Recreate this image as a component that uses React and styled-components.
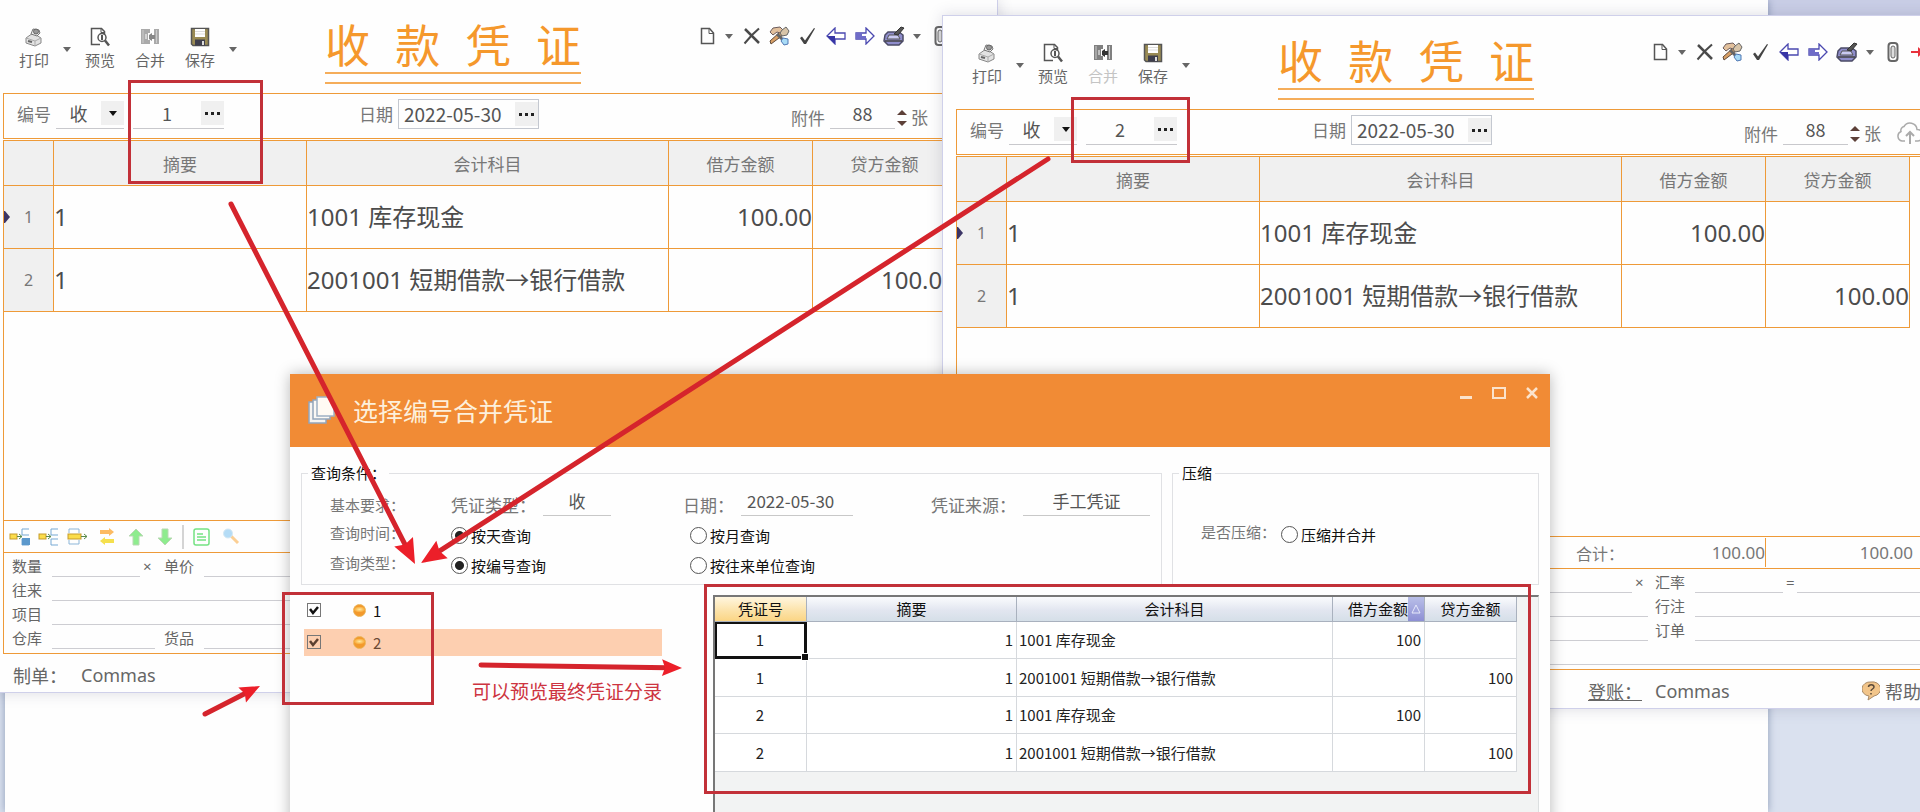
import React, { useState } from "react";
import styled, { createGlobalStyle, css } from "styled-components";

const GlobalStyle = createGlobalStyle`
  * {
    box-sizing: border-box;
  }
  body {
    margin: 0;
    font-family: "Noto Sans", "Noto Sans CJK SC", sans-serif;
    color: #666;
  }
  button, input, select {
    font-family: inherit;
    font-size: inherit;
    color: inherit;
    margin: 0;
    padding: 0;
    border: 0;
    border-radius: 0;
    background: transparent;
    outline: none;
  }
`;

const line = "#ee9a38";

const Desktop = styled.main`
  position: relative;
  height: 100vh;
  overflow: hidden;
  padding: 0 152px 0 5px;
  background: linear-gradient(#c9cee6 18px, #dae1ef 18px);
`;
const Page = styled.div`
  height: 100%;
  background: #fefefe;
  box-shadow: 0 0 8px rgba(70, 90, 130, 0.5);
`;

/* voucher window */
const Window = styled.section`
  position: absolute;
  left: ${(props) => props.$left}px;
  top: ${(props) => props.$top}px;
  width: 1009px;
  height: 694px;
  display: flex;
  flex-direction: column;
  border: 1px solid #cfd0ea;
  background: #fefefe;
  box-shadow: 0 0 14px rgba(60, 60, 100, 0.18);
  .${(props) => props.$covered}-part {
    visibility: hidden;
  }
`;
const WindowHeader = styled.header`
  display: flex;
  align-items: flex-start;
  height: 93px;
  padding-left: 19px;
`;
const Tools = styled.div`
  display: flex;
  padding-top: 27px;
`;
const ToolButton = styled.button`
  width: 50px;
  display: flex;
  flex-direction: column;
  align-items: center;
  gap: 3px;
  font-size: 15px;
  line-height: 20px;
  color: #666;
  &:disabled {
    color: #c4c4c4;
  }
`;
const DropButton = styled.button`
  width: ${(props) => props.$width || 16}px;
  height: 44px;
  display: flex;
  align-items: center;
  justify-content: center;
`;
const Caret = styled.span`
  border: 4px solid transparent;
  border-top: 5px solid ${(props) => props.color || "#666"};
  border-bottom: 0;
`;
const Title = styled.h1`
  width: 256px;
  margin: 20px 0 0 84px;
  display: flex;
  flex-wrap: wrap;
  justify-content: space-between;
  font-size: 45px;
  line-height: 52px;
  font-weight: 400;
  color: #f5982c;
  &::after {
    content: "";
    width: 100%;
    height: 8px;
    border-top: 2px solid #f5ad5a;
    border-bottom: 2px solid #f5ad5a;
  }
`;
const Actions = styled.div`
  display: flex;
  align-items: center;
  margin: 14px 0 0 115px;
`;
const Action = styled.button`
  width: ${(props) => props.$width || 29}px;
  height: 44px;
  display: flex;
  align-items: center;
  justify-content: center;
`;

const FilterBar = styled.div`
  display: flex;
  height: 46px;
  margin: 0 12px 0 13px;
  padding: 5px 0 0 13px;
  border: 1px solid ${line};
  font-size: 17px;
  line-height: 32px;
  color: #777;
`;
const Group = styled.div`
  display: flex;
  align-items: flex-start;
  margin-left: ${(props) => props.$left || 0}px;
`;
const FieldLabel = styled.label`
  white-space: nowrap;
  margin-right: 5px;
  padding-top: ${(props) => props.$drop || 0}px;
`;
const boxed = css`
  border: 1px solid #c4c8d0;
`;
const Picker = styled.div`
  display: flex;
  width: ${(props) => props.$width}px;
  height: 30px;
  margin-left: ${(props) => props.$left || 0}px;
  border-bottom: 1px solid #c8c8cc;
  color: #555;
  ${(props) => props.$boxed && boxed}
  select,
  input {
    flex: 1;
    min-width: 0;
    height: ${(props) => (props.$boxed ? 26 : 28)}px;
    padding: 0;
    text-align: ${(props) => (props.$boxed ? "left" : "center")};
    text-indent: ${(props) => (props.$boxed ? 5 : 0)}px;
    font-family: "Noto Sans CJK SC", sans-serif;
    font-size: ${(props) => (props.$boxed ? 19 : 18)}px;
  }
  select {
    appearance: none;
  }
`;
const PickerButton = styled.button`
  width: 23px;
  height: 24px;
  margin: 2px 0 0;
  display: flex;
  align-items: center;
  justify-content: center;
  gap: 3px;
  background: #f0f0f0;
  i {
    width: 3px;
    height: 3px;
    background: #222;
  }
`;
const Spinner = styled.div`
  display: flex;
  flex-direction: column;
  gap: 6px;
  padding-top: 11px;
  margin: 0 4px 0 2px;
  button {
    width: 10px;
    height: 5px;
    display: flex;
  }
  button:first-child {
    transform: rotate(180deg);
  }
  ${Caret} {
    border-width: 5px 5px 0;
  }
`;
const Cloud = styled.button`
  margin-left: 10px;
  padding-top: 6px;
  display: flex;
`;

const Frame = styled.div`
  flex: 1;
  display: flex;
  flex-direction: column;
  margin: 1px 12px 0 13px;
  border: 1px solid ${line};
  min-height: 0;
`;
const EntryTable = styled.table`
  width: calc(100% - 27px);
  table-layout: fixed;
  border-collapse: separate;
  border-spacing: 0;
  th,
  td {
    padding: 0;
    border-right: 1px solid ${line};
    border-bottom: 1px solid ${line};
  }
  th {
    background: #f0f0f0;
    font-size: 17px;
    font-weight: 400;
    color: #777;
  }
  thead th {
    height: 45px;
  }
  td {
    height: 63px;
    font-size: 24px;
    line-height: 32px;
    color: #4c4c4c;
    white-space: nowrap;
  }
`;
const Col = styled.col`
  width: ${(props) => (props.$width ? props.$width + "px" : "auto")};
`;
const RowHead = styled.th`
  && {
    font-size: 16px;
  }
`;
const RowHeadInner = styled.div`
  display: grid;
  grid-template-columns: 8px 1fr 8px;
  align-items: center;
  svg {
    display: block;
  }
`;
const Amount = styled.td`
  text-align: right;
`;
const Blank = styled.div`
  flex: 1;
`;
const LineTools = styled.div`
  display: flex;
  align-items: center;
  height: 33px;
  padding-left: 1px;
  border-top: 1px solid ${line};
  border-bottom: 1px solid ${line};
`;
const LineTool = styled.button`
  width: 29px;
  height: 24px;
  display: flex;
  align-items: center;
  justify-content: center;
`;
const Divider = styled.span`
  width: 2px;
  height: 24px;
  margin: 0 3px;
  background: #d4d4d4;
`;
const Totals = styled.div`
  display: flex;
  align-self: stretch;
  align-items: center;
  margin-left: auto;
  margin-right: 23px;
  font-size: 17px;
  color: #777;
`;
const TotalLabel = styled.span`
  width: 62px;
  font-size: 16px;
`;
const Total = styled.output`
  width: ${(props) => props.$width}px;
  height: 29px;
  line-height: 29px;
  text-align: right;
  border-right: 1px solid ${(props) => (props.$last ? "transparent" : line)};
`;
const Details = styled.div`
  display: grid;
  grid-template-rows: repeat(4, 24px);
  height: 100px;
  padding-left: 8px;
  font-size: 15px;
  line-height: 26px;
`;
const DetailRow = styled.div`
  display: flex;
  label {
    width: 40px;
    white-space: nowrap;
  }
`;
const Sign = styled.span`
  width: ${(props) => props.$width}px;
  padding-left: 3px;
`;
const LineInput = styled.input`
  height: 24px;
  min-width: 0;
  width: ${(props) => props.$width || 0}px;
  flex: ${(props) => (props.$width ? "none" : 1)};
  margin-right: ${(props) => props.$gap || 0}px;
  border-bottom: 1px solid #cdcdd2;
`;
const WindowFooter = styled.footer`
  display: flex;
  align-items: center;
  height: 38px;
  padding: 4px 0 0 23px;
  font-size: 18px;
`;
const Maker = styled.span`
  width: 68px;
`;
const Poster = styled.span`
  width: 67px;
  margin-left: 479px;
  text-decoration: underline;
  white-space: nowrap;
`;
const FooterName = styled.span`
  width: 75px;
`;
const Help = styled.a`
  display: flex;
  align-items: center;
  gap: 5px;
  margin-left: 132px;
  color: inherit;
  text-decoration: none;
  white-space: nowrap;
`;

/* merge dialog */
const Dialog = styled.section`
  position: absolute;
  left: 290px;
  top: 374px;
  width: 1260px;
  min-height: 460px;
  display: flex;
  flex-direction: column;
  background: #fefefe;
  box-shadow: 0 0 14px rgba(0, 0, 0, 0.28);
  font-family: "Noto Sans CJK SC", sans-serif;
`;
const DialogHeader = styled.header`
  display: flex;
  align-items: center;
  height: 73px;
  padding: 0 10px 2px 18px;
  background: #f18b35;
  h2 {
    flex: 1;
    margin: 0 0 0 17px;
    font-size: 25px;
    line-height: 36px;
    font-weight: 400;
    color: #fdf0dc;
  }
`;
const DialogControls = styled.div`
  display: flex;
  align-self: flex-start;
  gap: 17px;
  padding-top: 8px;
  button {
    width: 16px;
    height: 16px;
  }
`;
const DialogBody = styled.div`
  flex: 1;
  display: grid;
  grid-template-columns: 861px 1fr;
  grid-template-rows: auto 1fr;
  column-gap: 10px;
  padding: 16px 11px 0;
`;
const Fieldset = styled.fieldset`
  margin: 0;
  min-width: 0;
  height: 122px;
  padding: 5px 6px 6px;
  border: 1px solid #e0e1e4;
  font-size: 15px;
  color: #777;
  legend {
    padding: 0 3px;
    line-height: 20px;
    color: #111;
  }
`;
const QueryRow = styled.div`
  display: grid;
  grid-template-columns: 121px 239px 241px 1fr;
  align-items: center;
  height: 30px;
  padding: 0 0 4px 22px;
`;
const Value = styled.label`
  display: flex;
  align-items: center;
  gap: 7px;
  font-size: 17px;
  white-space: nowrap;
  margin-left: ${(props) => props.$left || 0}px;
`;
const ValueInput = styled.input`
  width: ${(props) => props.$width}px;
  height: 28px;
  padding: 0 6px 2px;
  margin-bottom: 4px;
  text-align: ${(props) => props.$align || "center"};
  border-bottom: 1px solid #c8c8c8;
  color: #555;
`;
const Choice = styled.label`
  display: flex;
  align-items: center;
  gap: 3px;
  padding-top: 7px;
  color: #111;
  white-space: nowrap;
  input {
    appearance: none;
    width: 17px;
    height: 17px;
    border: 1px solid #555;
    border-radius: 50%;
    background: #fff;
  }
  input:checked {
    background: radial-gradient(circle, #222 4px, #fff 5px);
  }
`;
const CompressRow = styled.div`
  display: flex;
  align-items: center;
  gap: 5px;
  height: 30px;
  margin-top: 30px;
  padding: 0 0 4px 22px;
`;
const Lower = styled.div`
  grid-column: 1 / -1;
  display: flex;
  padding-top: 10px;
`;
const NumberList = styled.ul`
  width: 358px;
  margin: 2px 51px 0 3px;
  padding: 0;
  list-style: none;
`;
const NumberItem = styled.li`
  height: 27px;
  margin-bottom: 5px;
  background: ${(props) => (props.$active ? "#fdcfb0" : "transparent")};
  label {
    display: flex;
    align-items: center;
    height: 26px;
    padding-left: 3px;
    font-size: 15px;
    color: ${(props) => (props.$active ? "#6b4a35" : "#111")};
  }
`;
const Check = styled.span`
  display: grid;
  width: 14px;
  height: 14px;
  margin-right: 32px;
  input,
  svg {
    grid-area: 1 / 1;
    width: 14px;
    height: 14px;
  }
  input {
    appearance: none;
    border: 1px solid #777;
  }
  svg {
    pointer-events: none;
  }
  input:not(:checked) + svg {
    visibility: hidden;
  }
`;
const Ball = styled.span`
  width: 13px;
  height: 13px;
  margin-right: 7px;
  border-radius: 50%;
  border: 1px solid #eab355;
  background: radial-gradient(ellipse 6px 3px at 50% 40%, #ffe9a0, #f9b042 80%, #f3992c);
`;
const GridPanel = styled.div`
  flex: 1;
  border: 1px solid #dcdfe0;
  border-top: 2px solid #777;
  border-left: 2px solid #777;
  background: #f2f3f3;
`;
const PreviewTable = styled.table`
  width: calc(100% - 21px);
  table-layout: fixed;
  border-collapse: separate;
  border-spacing: 0;
  font-size: 15px;
  line-height: 20px;
  color: #222;
  th,
  td {
    border-right: 1px solid #d6d9dd;
    border-bottom: 1px solid #d6d9dd;
    white-space: nowrap;
  }
  th {
    height: 25px;
    padding: 0;
    font-weight: 400;
    color: #111;
    border-color: #a9b1be;
    background: linear-gradient(#fafbfd, #e2e6f0 55%, #d5dfe8);
  }
  th:first-child {
    background: linear-gradient(#fff6df, #fce3ab 55%, #fbd584);
  }
  td {
    height: 37px;
    padding: 0 3px 0 2px;
    background: #fff;
    text-align: right;
  }
  tr:nth-child(even) td {
    height: 38px;
  }
  td:first-child {
    text-align: center;
  }
  td:nth-child(3) {
    text-align: left;
  }
`;
const SortHead = styled.div`
  display: flex;
  justify-content: flex-end;
  overflow: hidden;
  line-height: 24px;
`;
const SortMark = styled.button`
  width: 16px;
  height: 24px;
  background: linear-gradient(#b9bfe8, #8d8fd4);
  svg {
    display: block;
    margin: 0 auto;
  }
`;
const CurrentCell = styled.td`
  && {
    position: relative;
    border: 2px solid #111;
    border-right-width: 3px;
    border-bottom-width: 3px;
  }
  &::after {
    content: "";
    position: absolute;
    right: -5px;
    bottom: -5px;
    width: 6px;
    height: 6px;
    background: #111;
    border: 1px solid #fff;
  }
`;

/* red marks over the windows */
const MarkBox = styled.div`
  position: absolute;
  left: ${(props) => props.$x}px;
  top: ${(props) => props.$y}px;
  width: ${(props) => props.$w}px;
  height: ${(props) => props.$h}px;
  border: 3px solid #c23038;
  pointer-events: none;
`;
const MarkLayer = styled.svg`
  position: absolute;
  left: 0;
  top: 0;
  width: 1920px;
  height: 812px;
  pointer-events: none;
`;
const MarkText = styled.p`
  position: absolute;
  left: 472px;
  top: 678px;
  margin: 0;
  font-size: 19px;
  line-height: 28px;
  color: #cd3440;
`;

const PrintIcon = () => (
  <svg width="20" height="20" viewBox="0 0 20 20">
    <path d="M2 11l7-5 8 5v5l-6 3-9-3z" fill="#e2e2e2" stroke="#888" />
    <path d="M2 11l9 3 6-3M11 14v5" fill="none" stroke="#aaa" />
    <path d="M7 7l2-5 6 1 1 3-3 3z" fill="#eee" stroke="#777" />
    <circle cx="12" cy="4.500" r="2.500" fill="#999" stroke="#666" />
    <path d="M4 14l4 1" stroke="#666" strokeWidth="2" />
  </svg>
);
const PreviewIcon = () => (
  <svg width="20" height="20" viewBox="0 0 20 20" fill="none" stroke="#555">
    <path d="M10 17.500H1.500v-16h10l3 3V8" strokeWidth="1.500" />
    <path d="M11 1.500v4h4" />
    <circle cx="12" cy="10.500" r="4" strokeWidth="1.500" />
    <path d="M12 8v5" strokeWidth="2" />
    <path d="M15 13.500l4 5" strokeWidth="2.500" />
  </svg>
);
const MergeIcon = ({ dark }) => (
  <svg width="20" height="20" viewBox="0 0 20 20">
    <g fill={dark ? "#808080" : "#aaa"}>
      <path d="M1 2h9v4H8v7h2v4H1zM14 2h5v15h-5z" />
      <path d="M9 8l3-2v2h3v4h-3v2L9 12z" fill={dark ? "#333" : "#888"} />
    </g>
    <path d="M3 3v13M16.500 3v13" stroke="#ccc" />
    <path d="M6 7v5" stroke="#fff" />
  </svg>
);
const SaveIcon = () => (
  <svg width="20" height="20" viewBox="0 0 20 20">
    <path d="M1.500 1.500h17v17H3l-1.500-1.500z" fill="#9a8b54" stroke="#555" strokeWidth="1.500" />
    <path d="M5 2h10v8H5z" fill="#fff" />
    <path d="M5 4.500h10M5 7h10" stroke="#ddd" />
    <path d="M5 12.500h10v6H5z" fill="#3e3e4c" />
    <path d="M12 14h2v4h-2z" fill="#ddd" />
  </svg>
);
const PageIcon = () => (
  <svg width="16" height="18" viewBox="0 0 16 18" fill="none" stroke="#555" strokeWidth="1.500">
    <path d="M1.500 1.500h8l4 4.500v10.500h-12z" />
    <path d="M9 1.500v5h4.500" strokeWidth="1" />
  </svg>
);
const CrossIcon = () => (
  <svg width="18" height="18" viewBox="0 0 18 18" fill="none" stroke="#4a4a4a">
    <path d="M2 2l14 14" strokeWidth="2.500" />
    <path d="M16 1.500L9 8 1.500 16.500" strokeWidth="2" />
  </svg>
);
const ToolsIcon = () => (
  <svg width="21" height="20" viewBox="0 0 21 20">
    <path d="M2 18l-1-3 10-9 3 3z" fill="#d9a066" stroke="#604a3a" />
    <path d="M1 6l3-4 7-1 3 3-3 3-3-1-4 3z" fill="#e2c09c" stroke="#6b5b5b" />
    <path d="M8 8l9 9" stroke="#666" strokeWidth="3" />
    <path d="M13 4l4-3 3 4-2 4-5 1-2-3z" fill="#d8c4a8" stroke="#666" />
    <path d="M14 12l5 1v5l-4 1-3-4z" fill="#a9dcf7" stroke="#5078b4" />
  </svg>
);
const CheckIcon = () => (
  <svg width="17" height="18" viewBox="0 0 17 18">
    <path d="M1 11l2-1.500 3 4L15 1l1 .5L7 17H5z" fill="#444" />
  </svg>
);
const ArrowIcon = ({ right }) => (
  <svg width="20" height="18" viewBox="0 0 20 18">
    <g transform={right ? "matrix(-1 0 0 1 20 0)" : undefined}>
      <path d="M1 9l8-8v5h10v6H9v5z" fill="#fff" stroke="#4a48b0" strokeWidth="1.300" />
      {right ? (
        <path d="M9 9h10v3H9zM13 6h6v3h-6z" fill="#6f6cc8" />
      ) : (
        <path d="M1 9h8v8z" fill="#3735a5" />
      )}
    </g>
  </svg>
);
const FaxIcon = () => (
  <svg width="22" height="20" viewBox="0 0 22 20">
    <path d="M2 9l3-3h11l4 3v6l-4 4H5l-4-4z" fill="#8f8dcc" stroke="#4b4b66" strokeWidth="1.500" />
    <path d="M6 9h9l2 4H4z" fill="#c9c9f2" stroke="#555" />
    <path d="M2 15h17" stroke="#444" strokeWidth="1.500" />
    <path d="M11 8l7-7 3 1-6 7z" fill="#555" stroke="#333" />
  </svg>
);
const ClipIcon = () => (
  <svg width="12" height="20" viewBox="0 0 12 20" fill="none" stroke="#666">
    <rect x="1.500" y="1" width="9" height="18" rx="3" strokeWidth="2" />
    <rect x="4" y="4" width="4" height="12" rx="2" fill="#ddd" />
  </svg>
);
const ExitIcon = () => (
  <svg width="20" height="18" viewBox="0 0 20 18">
    <path d="M0 8h7V4l6 5-6 5v-4H0z" fill="#e8323c" />
    <path d="M12 1h7v16h-7" fill="none" stroke="#777" />
  </svg>
);
const CloudIcon = () => (
  <svg width="28" height="24" viewBox="0 0 28 24" fill="none" stroke="#aaa" strokeWidth="1.500">
    <path d="M9 20H6a5 5 0 0 1-1-9.500 4 4 0 0 1 3-5 7 7 0 0 1 13 3 5.500 5.500 0 0 1 1 11.500h-3" />
    <path d="M14 23V12M10 15l4-4 4 4" strokeWidth="2" />
  </svg>
);
const InsertIcon = ({ kind }) => (
  <svg width="21" height="18" viewBox="0 0 21 18" fill="none">
    {kind === "through" ? (
      <>
        <path d="M2 5V1h10v4M2 12v4h10v-4" stroke="#8db6d8" />
        <rect x="1" y="6" width="13" height="5" fill="#fbdc4a" stroke="#c69b2c" />
        <path d="M14 8.500h6M17 6l3 2.500-3 2.500" stroke="#5a8a4c" />
      </>
    ) : (
      <>
        <path d="M20 1h-7v6h7M20 11h-7v6h7" stroke="#76a9d4" />
        {kind === "filled" && <path d="M13 10h8v7h-8z" fill="#5b98cc" />}
        <rect x="1" y="6" width="7" height="5" fill="#fbdc4a" stroke="#c69b2c" />
        <path d="M8 8.500h5M10 6l3 2.500L10 11" stroke="#5a8a4c" />
      </>
    )}
  </svg>
);
const SwapIcon = () => (
  <svg width="16" height="18" viewBox="0 0 16 18">
    <path d="M1 2h9V0l5 4-5 4V6H1z" fill="#fdbb62" />
    <path d="M15 11H6V9l-5 4 5 4v-2h9z" fill="#f5e04e" />
  </svg>
);
const UpIcon = ({ down }) => (
  <svg width="16" height="18" viewBox="0 0 16 18">
    <path
      transform={down ? "rotate(180 8 9)" : undefined}
      d="M8 1l7 7h-4v9H5V8H1z"
      fill="#8eec8e"
      stroke="#b9d9b4"
    />
  </svg>
);
const NoteIcon = () => (
  <svg width="17" height="18" viewBox="0 0 17 18" fill="none" stroke="#74e283" strokeWidth="1.500">
    <rect x="1" y="1" width="15" height="16" rx="2" />
    <path d="M4 6h6M4 9h9M4 12h9" />
  </svg>
);
const SearchIcon = () => (
  <svg width="18" height="17" viewBox="0 0 18 17">
    <path d="M9 8l7 7" stroke="#fbcf94" strokeWidth="3" />
    <circle cx="6" cy="5.500" r="4.500" fill="#b4dcf6" stroke="#d5e8f4" />
  </svg>
);
const HelpIcon = () => (
  <svg width="18" height="20" viewBox="0 0 18 20">
    <path d="M9 1a8 7 0 0 1 3 14l-6 4 1-4A8 7 0 0 1 9 1z" fill="#f2c58a" stroke="#a98b68" />
    <path d="M6.500 6c0-3 5.500-3 5.500 0 0 2-3 2-3 4M9 12v1.500" fill="none" stroke="#5a4a3a" strokeWidth="1.500" />
  </svg>
);
const StackIcon = () => (
  <svg width="28" height="28" viewBox="0 0 28 28">
    <path d="M1 6h17v21H1z" fill="#f6f3f0" stroke="#93a5bb" strokeWidth="1.500" />
    <path d="M5 4h17v19H5z" fill="#fbf8f5" stroke="#93a5bb" strokeWidth="1.500" />
    <path d="M9 1h12l5 5v14H9z" fill="#fffaf4" stroke="#9fb0c4" strokeWidth="1.500" />
  </svg>
);

const entries = [
  { note: "1", account: "1001 库存现金", debit: "100.00", credit: "" },
  { note: "1", account: "2001001 短期借款→银行借款", debit: "", credit: "100.00" },
];

const preview = [
  { no: "1", note: "1", account: "1001 库存现金", debit: "100", credit: "" },
  { no: "1", note: "1", account: "2001001 短期借款→银行借款", debit: "", credit: "100" },
  { no: "2", note: "1", account: "1001 库存现金", debit: "100", credit: "" },
  { no: "2", note: "1", account: "2001001 短期借款→银行借款", debit: "", credit: "100" },
];

const Dots = ({ label }) => (
  <PickerButton type="button" aria-label={label}>
    <i />
    <i />
    <i />
  </PickerButton>
);

function VoucherWindow({ id, number, left, top, covered, mergeDisabled }) {
  return (
    <Window $left={left} $top={top} $covered={covered}>
      <WindowHeader>
        <Tools>
          <ToolButton>
            <PrintIcon />
            打印
          </ToolButton>
          <DropButton aria-label="打印选项">
            <Caret />
          </DropButton>
          <ToolButton>
            <PreviewIcon />
            预览
          </ToolButton>
          <ToolButton disabled={mergeDisabled}>
            <MergeIcon dark={mergeDisabled} />
            合并
          </ToolButton>
          <ToolButton>
            <SaveIcon />
            保存
          </ToolButton>
          <DropButton aria-label="保存选项">
            <Caret />
          </DropButton>
        </Tools>
        <Title>
          {["收", "款", "凭", "证"].map((char) => (
            <span key={char}>{char}</span>
          ))}
        </Title>
        <Actions>
          <Action $width={24} aria-label="新增">
            <PageIcon />
          </Action>
          <DropButton $width={18} aria-label="新增选项">
            <Caret />
          </DropButton>
          <Action $width={27} aria-label="删除">
            <CrossIcon />
          </Action>
          <Action aria-label="工具">
            <ToolsIcon />
          </Action>
          <Action $width={27} aria-label="审核">
            <CheckIcon />
          </Action>
          <Action aria-label="上一张">
            <ArrowIcon />
          </Action>
          <Action aria-label="下一张">
            <ArrowIcon right />
          </Action>
          <Action aria-label="传真">
            <FaxIcon />
          </Action>
          <DropButton $width={18} aria-label="传真选项">
            <Caret />
          </DropButton>
          <Action $width={27} aria-label="附件">
            <ClipIcon />
          </Action>
          <Action aria-label="退出">
            <ExitIcon />
          </Action>
        </Actions>
      </WindowHeader>

      <FilterBar>
        <Group>
          <FieldLabel htmlFor={id + "-type"}>编号</FieldLabel>
          <Picker $width={68}>
            <select id={id + "-type"}>
              <option>收</option>
            </select>
            <PickerButton as="span">
              <Caret color="#111" />
            </PickerButton>
          </Picker>
          <Picker $width={91} $left={9}>
            <input aria-label="凭证编号" defaultValue={number} />
            <Dots label="选择编号" />
          </Picker>
        </Group>
        <Group $left={135}>
          <FieldLabel htmlFor={id + "-date"}>日期</FieldLabel>
          <Picker $width={141} $boxed>
            <input id={id + "-date"} defaultValue="2022-05-30" />
            <Dots label="选择日期" />
          </Picker>
        </Group>
        <Group $left={252}>
          <FieldLabel htmlFor={id + "-files"} $drop={4}>
            附件
          </FieldLabel>
          <Picker $width={65}>
            <input id={id + "-files"} defaultValue="88" />
          </Picker>
          <Spinner>
            <button aria-label="增加">
              <Caret color="#5d4038" />
            </button>
            <button aria-label="减少">
              <Caret color="#5d4038" />
            </button>
          </Spinner>
          <FieldLabel as="span" $drop={3}>
            张
          </FieldLabel>
          <Cloud aria-label="上传">
            <CloudIcon />
          </Cloud>
        </Group>
      </FilterBar>

      <Frame>
        <EntryTable>
          <colgroup>
            <Col $width={50} />
            <Col $width={253} />
            <Col />
            <Col $width={144} />
            <Col $width={144} />
          </colgroup>
          <thead>
            <tr>
              <th aria-label="行号" />
              <th>摘要</th>
              <th>会计科目</th>
              <th>借方金额</th>
              <th>贷方金额</th>
            </tr>
          </thead>
          <tbody>
            {entries.map((entry, idx) => (
              <tr key={`entry-${idx}`}>
                <RowHead>
                  <RowHeadInner>
                    <svg width="8" height="12" viewBox="0 0 8 12">
                      {idx === 0 && <path d="M0 0h1l5 6-5 6H0z" fill="#3c3566" />}
                    </svg>
                    {idx + 1}
                  </RowHeadInner>
                </RowHead>
                <td>{entry.note}</td>
                <td>{entry.account}</td>
                <Amount>{entry.debit}</Amount>
                <Amount>{entry.credit}</Amount>
              </tr>
            ))}
          </tbody>
        </EntryTable>
        <Blank />
        <LineTools>
          <LineTool aria-label="插入分录">
            <InsertIcon kind="filled" />
          </LineTool>
          <LineTool aria-label="追加分录">
            <InsertIcon kind="open" />
          </LineTool>
          <LineTool aria-label="移出分录">
            <InsertIcon kind="through" />
          </LineTool>
          <LineTool aria-label="借贷互换">
            <SwapIcon />
          </LineTool>
          <LineTool aria-label="上移">
            <UpIcon />
          </LineTool>
          <LineTool aria-label="下移">
            <UpIcon down />
          </LineTool>
          <Divider />
          <LineTool aria-label="备注">
            <NoteIcon />
          </LineTool>
          <LineTool aria-label="查找">
            <SearchIcon />
          </LineTool>
          <Totals className="right-part">
            <TotalLabel>合计：</TotalLabel>
            <Total $width={128}>100.00</Total>
            <Total $width={148} $last>
              100.00
            </Total>
          </Totals>
        </LineTools>
        <Details>
          <DetailRow>
            <label className="left-part" htmlFor={id + "-qty"}>
              数量
            </label>
            <LineInput id={id + "-qty"} $width={88} />
            <Sign className="left-part" $width={24}>
              ×
            </Sign>
            <label className="left-part" htmlFor={id + "-price"}>
              单价
            </label>
            <LineInput id={id + "-price"} $width={475} />
            <Sign className="right-part" $width={23}>
              ×
            </Sign>
            <label className="right-part" htmlFor={id + "-rate"}>
              汇率
            </label>
            <LineInput id={id + "-rate"} $width={88} />
            <Sign className="right-part" $width={14}>
              =
            </Sign>
            <LineInput aria-label="金额" />
          </DetailRow>
          <DetailRow>
            <label className="left-part" htmlFor={id + "-party"}>
              往来
            </label>
            <LineInput id={id + "-party"} $width={643} $gap={7} />
            <label className="right-part" htmlFor={id + "-memo"}>
              行注
            </label>
            <LineInput id={id + "-memo"} />
          </DetailRow>
          <DetailRow>
            <label className="left-part" htmlFor={id + "-project"}>
              项目
            </label>
            <LineInput id={id + "-project"} $width={643} $gap={7} />
            <label className="right-part" htmlFor={id + "-order"}>
              订单
            </label>
            <LineInput id={id + "-order"} />
          </DetailRow>
          <DetailRow>
            <label className="left-part" htmlFor={id + "-store"}>
              仓库
            </label>
            <LineInput id={id + "-store"} $width={103} $gap={9} />
            <label className="left-part" htmlFor={id + "-goods"}>
              货品
            </label>
            <LineInput id={id + "-goods"} />
          </DetailRow>
        </Details>
      </Frame>

      <WindowFooter>
        <Maker className="left-part">制单：</Maker>
        <FooterName className="left-part">Commas</FooterName>
        <Poster className="right-part">登账：</Poster>
        <FooterName className="right-part">Commas</FooterName>
        <Help className="right-part" href="#help">
          <HelpIcon />
          帮助
        </Help>
      </WindowFooter>
    </Window>
  );
}

function MergeDialog() {
  const [checked, setChecked] = useState({ 1: true, 2: true });
  const toggle = (no) => setChecked({ ...checked, [no]: !checked[no] });

  return (
    <Dialog role="dialog" aria-labelledby="merge-title">
      <DialogHeader>
        <StackIcon />
        <h2 id="merge-title">选择编号合并凭证</h2>
        <DialogControls>
          <button aria-label="最小化">
            <svg width="16" height="16" viewBox="0 0 16 16">
              <path d="M2 12.500h12" stroke="#fbe3cc" strokeWidth="3" />
            </svg>
          </button>
          <button aria-label="最大化">
            <svg width="16" height="16" viewBox="0 0 16 16">
              <path d="M2 3h12v10H2z" fill="none" stroke="#fbe3cc" strokeWidth="2" />
            </svg>
          </button>
          <button aria-label="关闭">
            <svg width="16" height="16" viewBox="0 0 16 16">
              <path d="M3 3l10 10M13 3L3 13" stroke="#fbe3cc" strokeWidth="2.500" />
            </svg>
          </button>
        </DialogControls>
      </DialogHeader>
      <DialogBody>
        <Fieldset>
          <legend>查询条件：</legend>
          <QueryRow>
            <span>基本要求：</span>
            <Value>
              凭证类型：
              <ValueInput $width={68} defaultValue="收" />
            </Value>
            <Value $left={-7}>
              日期：
              <ValueInput $width={112} $align="left" defaultValue="2022-05-30" />
            </Value>
            <Value>
              凭证来源：
              <ValueInput $width={127} defaultValue="手工凭证" />
            </Value>
          </QueryRow>
          <QueryRow>
            <span>查询时间：</span>
            <Choice>
              <input type="radio" name="period" defaultChecked />
              按天查询
            </Choice>
            <Choice>
              <input type="radio" name="period" />
              按月查询
            </Choice>
          </QueryRow>
          <QueryRow>
            <span>查询类型：</span>
            <Choice>
              <input type="radio" name="kind" defaultChecked />
              按编号查询
            </Choice>
            <Choice>
              <input type="radio" name="kind" />
              按往来单位查询
            </Choice>
          </QueryRow>
        </Fieldset>
        <Fieldset>
          <legend>压缩</legend>
          <CompressRow>
            <span>是否压缩：</span>
            <Choice>
              <input type="radio" name="compress" />
              压缩并合并
            </Choice>
          </CompressRow>
        </Fieldset>
        <Lower>
          <NumberList>
            {[1, 2].map((no) => (
              <NumberItem key={no} $active={no === 2}>
                <label>
                  <Check>
                    <input
                      type="checkbox"
                      checked={checked[no]}
                      onChange={() => toggle(no)}
                    />
                    <svg viewBox="0 0 14 14">
                      <path
                        d="M3 6l3 4 5-6"
                        fill="none"
                        stroke={no === 2 ? "#5c4030" : "#111"}
                        strokeWidth="2.500"
                      />
                    </svg>
                  </Check>
                  <Ball />
                  {no}
                </label>
              </NumberItem>
            ))}
          </NumberList>
          <GridPanel>
            <PreviewTable>
              <colgroup>
                <Col $width={92} />
                <Col $width={210} />
                <Col />
                <Col $width={92} />
                <Col $width={92} />
              </colgroup>
              <thead>
                <tr>
                  <th>凭证号</th>
                  <th>摘要</th>
                  <th>会计科目</th>
                  <th>
                    <SortHead>
                      <span>借方金额</span>
                      <SortMark aria-label="排序">
                        <svg width="12" height="12" viewBox="0 0 12 12">
                          <path d="M2 10l4-8 4 8z" fill="none" stroke="#e6e8fa" />
                        </svg>
                      </SortMark>
                    </SortHead>
                  </th>
                  <th>贷方金额</th>
                </tr>
              </thead>
              <tbody>
                {preview.map((row, idx) => {
                  const First = idx === 0 ? CurrentCell : "td";
                  return (
                    <tr key={`preview-${idx}`}>
                      <First>{row.no}</First>
                      <td>{row.note}</td>
                      <td>{row.account}</td>
                      <td>{row.debit}</td>
                      <td>{row.credit}</td>
                    </tr>
                  );
                })}
              </tbody>
            </PreviewTable>
          </GridPanel>
        </Lower>
      </DialogBody>
    </Dialog>
  );
}

function Arrow({ from, to, width = 5, size = 25 }) {
  const dx = to[0] - from[0];
  const dy = to[1] - from[1];
  const length = Math.hypot(dx, dy);
  const angle = (Math.atan2(dy, dx) * 180) / Math.PI;
  return (
    <g transform={`translate(${from[0]} ${from[1]}) rotate(${angle})`}>
      <path
        d={`M0 0H${length - size + 6}`}
        stroke="#d5242c"
        strokeWidth={width}
        strokeLinecap="round"
      />
      <path
        d={`M${length} 0l${-size} ${-size * 0.42}l3 ${size * 0.42}l-3 ${size * 0.42}z`}
        fill="#ec1f29"
      />
    </g>
  );
}

function App() {
  return (
    <Desktop>
      <GlobalStyle />
      <Page />
      <VoucherWindow id="first" number="1" left={-11} top={-1} covered="right" />
      <VoucherWindow
        id="second"
        number="2"
        left={942}
        top={15}
        covered="left"
        mergeDisabled
      />
      <MergeDialog />
      <MarkBox $x={128} $y={80} $w={135} $h={104} />
      <MarkBox $x={1071} $y={97} $w={119} $h={66} />
      <MarkBox $x={282} $y={592} $w={152} $h={113} />
      <MarkBox $x={704} $y={584} $w={827} $h={210} />
      <MarkLayer viewBox="0 0 1920 812">
        <Arrow from={[231, 204]} to={[415, 564]} />
        <Arrow from={[1048, 159]} to={[421, 563]} />
        <Arrow from={[205, 714]} to={[260, 686]} size={20} />
        <Arrow from={[481, 665]} to={[682, 668]} size={20} />
      </MarkLayer>
      <MarkText>可以预览最终凭证分录</MarkText>
    </Desktop>
  );
}

export default App;
